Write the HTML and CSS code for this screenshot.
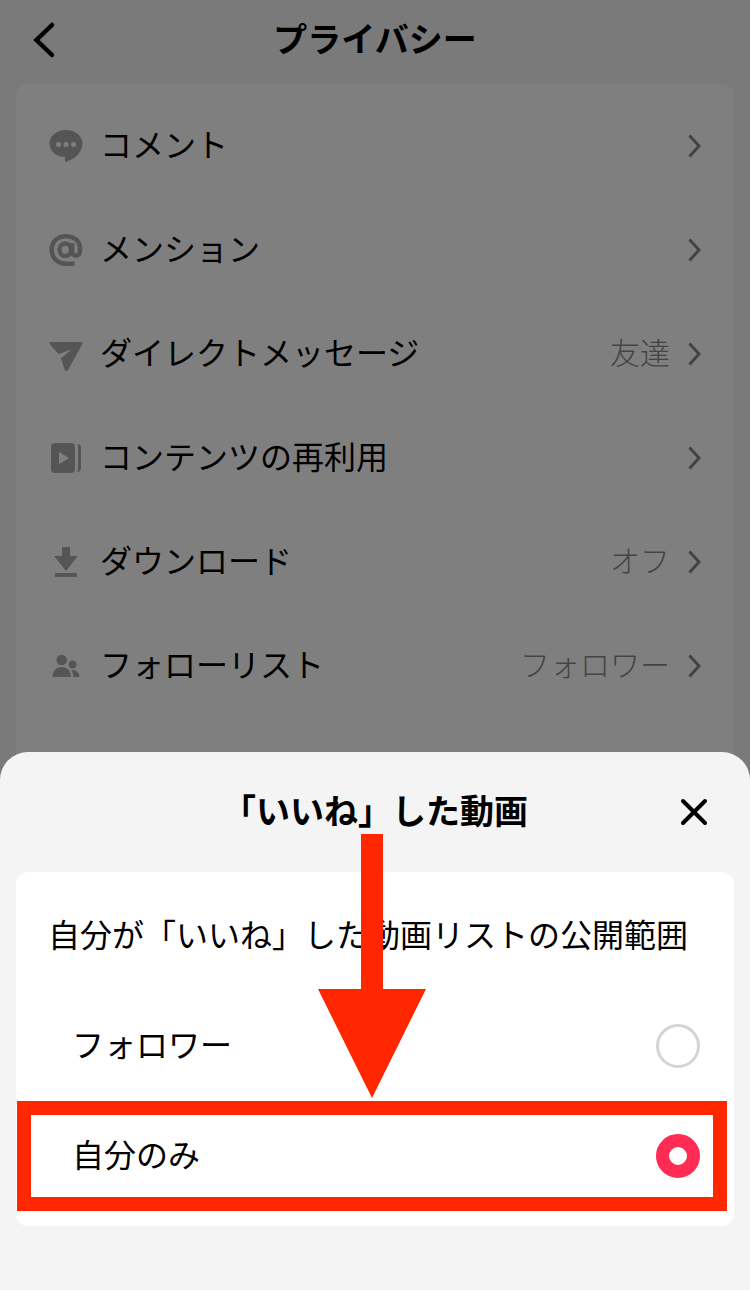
FILE: index.html
```html
<!DOCTYPE html>
<html lang="ja">
<head>
	<meta charset="UTF-8">
	<meta name="viewport" content="width=device-width, initial-scale=1">
	<title>プライバシー</title>
	<link rel="stylesheet" href="styles.css">
</head>
<body>
	<main class="page">
		<header class="page-header">
			<button type="button" class="icon-button">
				<svg width="40" height="40" viewBox="0 0 40 40"><path d="M28 5L12.500 20L28 35" fill="none" stroke="#000" stroke-width="4.500" stroke-linecap="round"/></svg>
			</button>
			<h1 class="title">プライバシー</h1>
		</header>
		<ul class="card menu">
			<li>
				<a class="row" href="#">
					<svg class="icon" viewBox="0 0 36 36"><path d="M18 2C8.500 2 1.500 8 1.500 15.500S8 29 17 29V34C26 32 34.500 25 34.500 15.500C34.500 8 27.500 2 18 2Z"/><g fill="#fff"><circle cx="10.500" cy="16.500" r="2.500"/><circle cx="18" cy="16.500" r="2.500"/><circle cx="25.500" cy="16.500" r="2.500"/></g></svg>
					<span class="name">コメント</span>
					<svg class="arrow" viewBox="0 0 14 24"><path d="M1.500 1.500L11 12L1.500 22.500"/></svg>
				</a>
			</li>
			<li>
				<a class="row" href="#">
					<svg class="icon" viewBox="0 0 36 36"><g fill="none" stroke="#aaa" stroke-width="4.500"><path d="M26.500 31.700H18C9 31.700 3.700 25.500 3.700 18C3.700 9.500 9.500 4.200 18 4.200S32 9.500 32 16V19C32 25 24.200 25 24.200 20V11"/><ellipse cx="17.300" cy="17.800" rx="5.800" ry="6.300"/></g></svg>
					<span class="name">メンション</span>
					<svg class="arrow" viewBox="0 0 14 24"><path d="M1.500 1.500L11 12L1.500 22.500"/></svg>
				</a>
			</li>
			<li>
				<a class="row" href="#">
					<svg class="icon" viewBox="0 0 36 36"><path d="M3 6H33C34.500 6 35 7 34.200 8.300L20 34C19 35.500 17.200 35.500 16.700 34L13 22.500L23.500 13.500L10.500 18L2 8.500C1 7.200 1.500 6 3 6Z"/></svg>
					<span class="name">ダイレクトメッセージ</span>
					<span class="value">友達</span>
					<svg class="arrow" viewBox="0 0 14 24"><path d="M1.500 1.500L11 12L1.500 22.500"/></svg>
				</a>
			</li>
			<li>
				<a class="row" href="#">
					<svg class="icon" viewBox="0 0 36 36"><path fill-rule="evenodd" d="M7 3H23Q27 3 27 7V29Q27 33 23 33H7Q3 33 3 29V7Q3 3 7 3ZM11 12V24L21 18Z"/><path d="M29 4Q33 4 33 8V28Q33 32 29 32Q30 31 30 29V7Q30 5 29 4Z"/></svg>
					<span class="name">コンテンツの再利用</span>
					<svg class="arrow" viewBox="0 0 14 24"><path d="M1.500 1.500L11 12L1.500 22.500"/></svg>
				</a>
			</li>
			<li>
				<a class="row" href="#">
					<svg class="icon" viewBox="0 0 36 36"><path d="M14 3H22V12H30L18 27L6 12H14Z"/><rect x="7" y="29" width="22" height="4"/></svg>
					<span class="name">ダウンロード</span>
					<span class="value">オフ</span>
					<svg class="arrow" viewBox="0 0 14 24"><path d="M1.500 1.500L11 12L1.500 22.500"/></svg>
				</a>
			</li>
			<li>
				<a class="row" href="#">
					<svg class="icon" viewBox="0 0 36 36"><circle cx="13.700" cy="12" r="5.300"/><circle cx="24.600" cy="16.500" r="3.900"/><path d="M4.500 29C4.500 23 8 19 13.700 19S23 23 23 29Z"/><path d="M23.300 22.200C28 21.300 31.500 24.500 31.500 29H25.300C25.300 26.500 24.600 24 23.300 22.200Z"/></svg>
					<span class="name">フォローリスト</span>
					<span class="value">フォロワー</span>
					<svg class="arrow" viewBox="0 0 14 24"><path d="M1.500 1.500L11 12L1.500 22.500"/></svg>
				</a>
			</li>
		</ul>
	</main>

	<div class="overlay">
		<section class="sheet">
			<header class="sheet-header">
				<h2 class="title">「いいね」した動画</h2>
				<button type="button" class="icon-button close">
					<svg width="40" height="40" viewBox="0 0 40 40"><path d="M9 9L31 31M31 9L9 31" fill="none" stroke="#000" stroke-width="4" stroke-linecap="round"/></svg>
				</button>
			</header>
			<fieldset class="card options">
				<legend class="lead">自分が「いいね」した動画リストの公開範囲</legend>
				<label class="option">
					<span>フォロワー</span>
					<input type="radio" name="likes" value="followers">
				</label>
				<label class="option marked">
					<span>自分のみ</span>
					<input type="radio" name="likes" value="me" checked>
				</label>
			</fieldset>
			<svg class="pointer" width="108" height="264" viewBox="0 0 108 264"><path d="M43 0H65V155H108L54 264L0 155H43Z" fill="#ff2600"/></svg>
		</section>
	</div>
</body>
</html>
```
FILE: styles.css
```css
* {
	box-sizing: border-box;
}
body {
	margin: 0;
	background: #f4f4f4;
	color: #000;
	font-family: "Noto Sans CJK JP", sans-serif;
	font-size: 32px;
	line-height: 48px;
}
.page {
	display: flex;
	flex-direction: column;
	height: 100vh;
	overflow: hidden;
}
.page-header, .sheet-header {
	display: grid;
	grid-template-columns: 40px 1fr 40px;
	align-items: center;
	height: 120px;
	padding: 0 36px;
}
.page-header {
	height: 84px;
	padding: 0 24px 4px;
}
.title {
	margin: 0;
	padding-bottom: 4px;
	font-size: 34px;
	font-weight: 700;
	text-align: center;
}
.icon-button {
	display: flex;
	width: 40px;
	height: 40px;
	padding: 0;
	border: 0;
	background: none;
	cursor: pointer;
}
.card {
	margin: 0 16px;
	border-radius: 12px;
	background: #fff;
}

/* settings list */
.menu {
	flex: 1;
	padding: 10px 32px;
	list-style: none;
}
.row {
	display: flex;
	align-items: center;
	height: 104px;
	color: #000;
	text-decoration: none;
}
.icon {
	width: 36px;
	height: 36px;
	margin-right: 16px;
	fill: #aaa;
}
.name, .value, .option span {
	padding-bottom: 6px;
}
.name {
	flex: 1;
}
.value {
	color: #888;
	font-size: 30px;
	font-weight: 300;
}
.arrow {
	width: 14px;
	height: 24px;
	margin-left: 18px;
	fill: none;
	stroke: #888;
	stroke-width: 3;
}

/* bottom sheet */
.overlay {
	position: fixed;
	inset: 0;
	display: flex;
	align-items: flex-end;
	background: rgba(0, 0, 0, .5);
}
.sheet {
	position: relative;
	width: 100%;
	padding-bottom: 64px;
	border-radius: 28px 28px 0 0;
	background: #f4f4f4;
}
.sheet-header .title {
	grid-column: 2;
}
.options {
	min-width: 0;
	padding: 0 0 15px;
	border: 0;
}
.lead {
	float: left;
	width: 100%;
	padding: 37px 32px 34px;
}
.option {
	position: relative;
	clear: both;
	display: flex;
	align-items: center;
	justify-content: space-between;
	height: 110px;
	padding: 0 34px 0 56px;
	cursor: pointer;
}
.option input {
	appearance: none;
	width: 44px;
	height: 44px;
	margin: 0;
	border: 3px solid #d4d4d4;
	border-radius: 50%;
}
.option input:checked {
	border: 13px solid #fe2c55;
}
/* red frame round the chosen option */
.marked::after {
	content: "";
	position: absolute;
	inset: 0 7px 0 1px;
	border: 14px solid #ff2600;
}
.pointer {
	position: absolute;
	top: 82px;
	left: calc(50% - 57px);
}
```
